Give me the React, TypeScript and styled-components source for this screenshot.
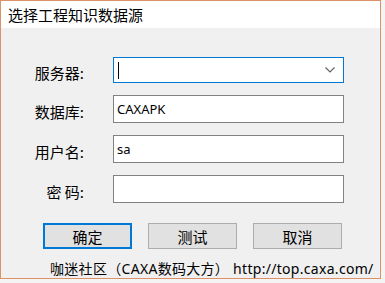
import React from 'react';
import styled, { createGlobalStyle } from 'styled-components';

const GlobalStyle = createGlobalStyle`
  html, body {
    margin: 0;
    padding: 0;
    background: #f4f4f4;
  }
  body {
    font-family: "Noto Sans", "Noto Sans CJK SC", sans-serif;
    color: #000;
  }
`;

interface FieldProps {
  label: string;
  value?: string;
  combo?: boolean;
  focused?: boolean;
}

const Field: React.FC<FieldProps> = ({ label, value, combo, focused }) => (
  <>
    <Label>{label}</Label>
    {combo ? (
      <Combo $focused={focused}>
        <Caret />
        <ChevronIcon width="10" height="6" viewBox="0 0 10 6">
          <path d="M0.5 0.5 L5 5 L9.5 0.5" fill="none" stroke="#606060" strokeWidth="1.1" />
        </ChevronIcon>
      </Combo>
    ) : (
      <TextBox>{value}</TextBox>
    )}
  </>
);

const App: React.FC = () => {
  return (
    <>
      <GlobalStyle />
      <Window>
        <TitleBar>选择工程知识数据源</TitleBar>
        <Form>
          <Field label="服务器:" combo focused />
          <Field label="数据库:" value="CAXAPK" />
          <Field label="用户名:" value="sa" />
          <Field label="密 码:" value="" />
        </Form>
        <ButtonRow>
          <DialogButton $primary>确定</DialogButton>
          <DialogButton>测试</DialogButton>
          <DialogButton>取消</DialogButton>
        </ButtonRow>
        <Footer>咖迷社区（CAXA数码大方） http://top.caxa.com/</Footer>
      </Window>
    </>
  );
};

const Window = styled.div`
  box-sizing: border-box;
  width: 381px;
  height: 279px;
  border: 1px solid #dc9168;
  background: #f0f0f0;
  display: flex;
  flex-direction: column;
`;

const TitleBar = styled.div`
  height: 31px;
  background: #fff;
  padding-left: 7px;
  display: flex;
  align-items: center;
  font-family: "Noto Sans CJK SC", sans-serif;
  font-size: 15px;
`;

const Form = styled.div`
  display: grid;
  grid-template-columns: 83px 231px;
  grid-template-rows: 26px 28px 28px 28px;
  column-gap: 29px;
  row-gap: 12px;
  padding-top: 29px;
`;

const Label = styled.div`
  display: flex;
  align-items: center;
  justify-content: flex-end;
  padding-top: 4px;
  font-family: "Noto Sans CJK SC", sans-serif;
  font-size: 15px;
  white-space: pre;
`;

const Combo = styled.div<{ $focused?: boolean }>`
  box-sizing: border-box;
  display: flex;
  align-items: center;
  justify-content: space-between;
  padding: 0 8px 0 4px;
  background: #fff;
  border: 1px solid ${p => (p.$focused ? '#0078d7' : '#7a7a7a')};
`;

const Caret = styled.span`
  width: 1px;
  height: 17px;
  background: #000;
`;

const ChevronIcon = styled.svg`
  display: block;
`;

const TextBox = styled.div`
  box-sizing: border-box;
  display: flex;
  align-items: center;
  padding: 0 3px;
  background: #fff;
  border: 1px solid #828282;
  font-family: "Noto Sans", "Noto Sans CJK SC", sans-serif;
  font-size: 13px;
`;

const ButtonRow = styled.div`
  display: flex;
  gap: 16px;
  padding: 20px 0 0 42px;
`;

const DialogButton = styled.button<{ $primary?: boolean }>`
  box-sizing: border-box;
  width: 89px;
  height: 26px;
  padding: 0;
  background: #e1e1e1;
  border: ${p => (p.$primary ? '2px solid #0078d7' : '1px solid #adadad')};
  font-family: "Noto Sans CJK SC", sans-serif;
  font-size: 15px;
  color: #000;
`;

const Footer = styled.div`
  margin-top: 11px;
  padding-left: 49px;
  font-family: "Noto Sans", "Noto Sans CJK SC", sans-serif;
  font-size: 14px;
  letter-spacing: 0.3px;
  line-height: 18px;
  white-space: nowrap;
`;

export default App;
